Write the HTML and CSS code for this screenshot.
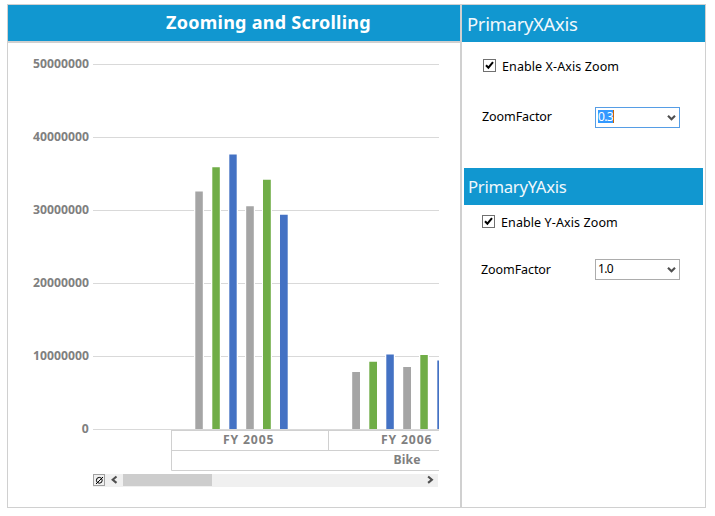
FILE: index.html
```html
<!DOCTYPE html>
<html lang="en">
<head>
<meta charset="utf-8">
<title>Zooming and Scrolling</title>
<link rel="stylesheet" href="styles.css">
</head>
<body>
<main class="frame">
  <section class="chart-panel">
    <h1 class="chart-title"><span>Zooming and Scrolling</span></h1>
    <svg class="chart" width="452" height="431" viewBox="8 43 452 431">
      <g class="grid">
        <path d="M93 64.5H439M93 137.5H439M93 210.5H439M93 283.5H439M93 356.5H439M93 429.5H439"/>
      </g>
      <g class="label">
        <text x="33" y="68" textLength="56">50000000</text>
        <text x="33" y="141" textLength="56">40000000</text>
        <text x="33" y="214" textLength="56">30000000</text>
        <text x="33" y="287" textLength="56">20000000</text>
        <text x="33" y="360" textLength="56">10000000</text>
        <text x="81.8" y="433">0</text>
      </g>
      <g class="halo">
        <path d="M194 190h10v239h-10zM211 166h10v263h-10zM228 153h10v276h-10zM245 205h10v224h-10zM262 178h10v251h-10zM385 353h10v76h-10zM419 354h10v75h-10z"/>
      </g>
      <g class="bar-gray">
        <path d="M195.3 191.4h7.5V429h-7.5zM246.2 206.3h7.6V429h-7.6zM352.2 372h7.8V429h-7.8zM403.2 367h7.8V429h-7.8z"/>
      </g>
      <g class="bar-green">
        <path d="M212.3 167.2h7.5V429h-7.5zM263 179.7h7.8V429h-7.8zM369.3 361.7h7.7V429h-7.7zM420.3 355h7.5V429h-7.5z"/>
      </g>
      <g class="bar-blue">
        <path d="M229.3 154.4h7.4V429h-7.4zM280 214.7h7.7V429h-7.7zM386.3 354.6h7.5V429h-7.5zM437.3 360.5h1.7V429h-1.7z"/>
      </g>
      <g class="axis">
        <path d="M171.5 430V470.5H439M171 430.5H439M171 450.5H439M328.5 430V450"/>
      </g>
      <g class="label">
        <text x="223" y="444" textLength="50.5">FY 2005</text>
        <text x="381" y="444" textLength="50.5">FY 2006</text>
        <text x="393.5" y="464" textLength="27">Bike</text>
      </g>
    </svg>
    <div class="scrollbar">
      <div class="reset">
        <svg width="10" height="10" viewBox="0 0 10 10"><ellipse cx="5.3" cy="5.3" rx="2.9" ry="2.9"/><path d="M2 9L9 2"/></svg>
      </div>
      <svg class="arrow" width="18" height="13" viewBox="0 0 18 13"><path d="M11.5 2.5L7.7 5.7L11.5 8.9"/></svg>
      <div class="thumb"></div>
      <svg class="arrow arrow-end" width="14" height="13" viewBox="0 0 14 13"><path d="M4.1 2.5L7.9 5.7L4.1 8.9"/></svg>
    </div>
  </section>
  <aside class="settings">
    <h2 class="axis-title"><span>PrimaryXAxis</span></h2>
    <div class="options">
      <label class="check"><svg class="box" width="13" height="13" viewBox="0 0 13 13"><rect x=".5" y=".5" width="12" height="12"/><path d="M3 6.2L5.4 8.7L10 3.2"/></svg><span>Enable X-Axis Zoom</span></label>
      <div class="field"><span class="field-name">ZoomFactor</span>
        <div class="combo"><span class="value selected">0.3</span><svg width="9" height="8" viewBox="0 0 9 8"><path d="M1 1.8L4.5 5.2L8 1.8"/></svg></div>
      </div>
    </div>
    <h2 class="axis-title axis-title-y"><span>PrimaryYAxis</span></h2>
    <div class="options options-y">
      <label class="check"><svg class="box" width="13" height="13" viewBox="0 0 13 13"><rect x=".5" y=".5" width="12" height="12"/><path d="M3 6.2L5.4 8.7L10 3.2"/></svg><span>Enable Y-Axis Zoom</span></label>
      <div class="field"><span class="field-name">ZoomFactor</span>
        <div class="combo"><span class="value">1.0</span><svg width="9" height="8" viewBox="0 0 9 8"><path d="M1 1.8L4.5 5.2L8 1.8"/></svg></div>
      </div>
    </div>
  </aside>
</main>
</body>
</html>
```
FILE: styles.css
```css
* { box-sizing: border-box; }
body {
  margin: 0;
  background: #fff;
  color: #000;
  font-family: "Noto Sans", "Open Sans", sans-serif;
}
.frame {
  display: flex;
  width: 699px;
  height: 504px;
  margin: 4px 0 0 7px;
  border: 1px solid #d0d0d0;
}
.chart-panel {
  display: flex;
  flex-direction: column;
  width: 454px;
  border-right: 2px solid #d0d0d0;
}
.chart-title {
  height: 38px;
  margin: 0;
  padding-left: 158px;
  border-bottom: 2px solid #d0d0d0;
  background: #1197d0;
  color: #fff;
  font-size: 18px;
  font-weight: 700;
  letter-spacing: .26px;
  line-height: 35px;
  white-space: nowrap;
}
.chart { display: block; flex: none; }
.grid path { stroke: #d9d9d9; fill: none; }
.axis path { stroke: #d0d0d0; fill: none; }
.halo { fill: #fff; }
.bar-gray { fill: #a5a5a5; }
.bar-green { fill: #70ad47; }
.bar-blue { fill: #4472c4; }
.label { fill: #808080; font-size: 12.2px; font-weight: 700; }
.scrollbar {
  display: flex;
  width: 345px;
  height: 13px;
  margin-left: 85px;
  background: #f0f0f0;
}
.reset {
  width: 12px;
  height: 12px;
  border: 1px solid #a0a0a0;
}
.reset svg { display: block; fill: none; stroke: #000; stroke-width: 1; }
.arrow { fill: none; stroke: #505050; stroke-width: 2.1; }
.arrow-end { margin-left: auto; }
.thumb { width: 89px; height: 12px; background: #cdcdcd; }
.settings { flex: 1; }
.axis-title {
  height: 37px;
  margin: 0;
  padding-left: 5px;
  background: #1197d0;
  color: #f0f8fc;
  font-size: 18.5px;
  font-weight: 400;
  letter-spacing: -.33px;
  line-height: 38px;
}
.axis-title-y {
  margin: 0 2px;
  padding-left: 4px;
  font-size: 16.7px;
  letter-spacing: -.28px;
}
.options { height: 126px; padding: 17px 0 0 20px; }
.options-y { padding: 10px 0 0 20px; }
.check {
  display: flex;
  height: 14px;
  margin-left: 1px;
  align-items: flex-start;
  gap: 6px;
  font-size: 12.5px;
  letter-spacing: .1px;
  line-height: 16px;
}
.options-y .check { margin-left: 0; }
.box { flex: none; }
.box rect { fill: #fff; stroke: #707070; }
.box path { fill: none; stroke: #000; stroke-width: 2; }
.field {
  display: flex;
  align-items: center;
  height: 21px;
  margin-top: 34px;
  font-size: 12.5px;
  letter-spacing: -.08px;
}
.options-y .field { margin-top: 30px; }
.field-name { width: 113px; }
.options .field-name { padding-bottom: 2px; }
.options-y .field-name { margin-left: -1px; width: 114px; padding-bottom: 0; }
.combo {
  display: flex;
  align-items: center;
  justify-content: space-between;
  width: 85px;
  height: 21px;
  padding: 0 3px 0 2px;
  border: 1px solid #569de5;
}
.options-y .combo { border-color: #acacac; }
.value {
  height: 13px;
  margin-bottom: 2px;
  font-size: 12px;
  line-height: 13px;
  letter-spacing: -.65px;
}
.selected { background: #3399ff; color: #fff; border-right: 1px solid #cc6600; }
.combo svg { fill: none; stroke: #505050; stroke-width: 2.2; }
```
